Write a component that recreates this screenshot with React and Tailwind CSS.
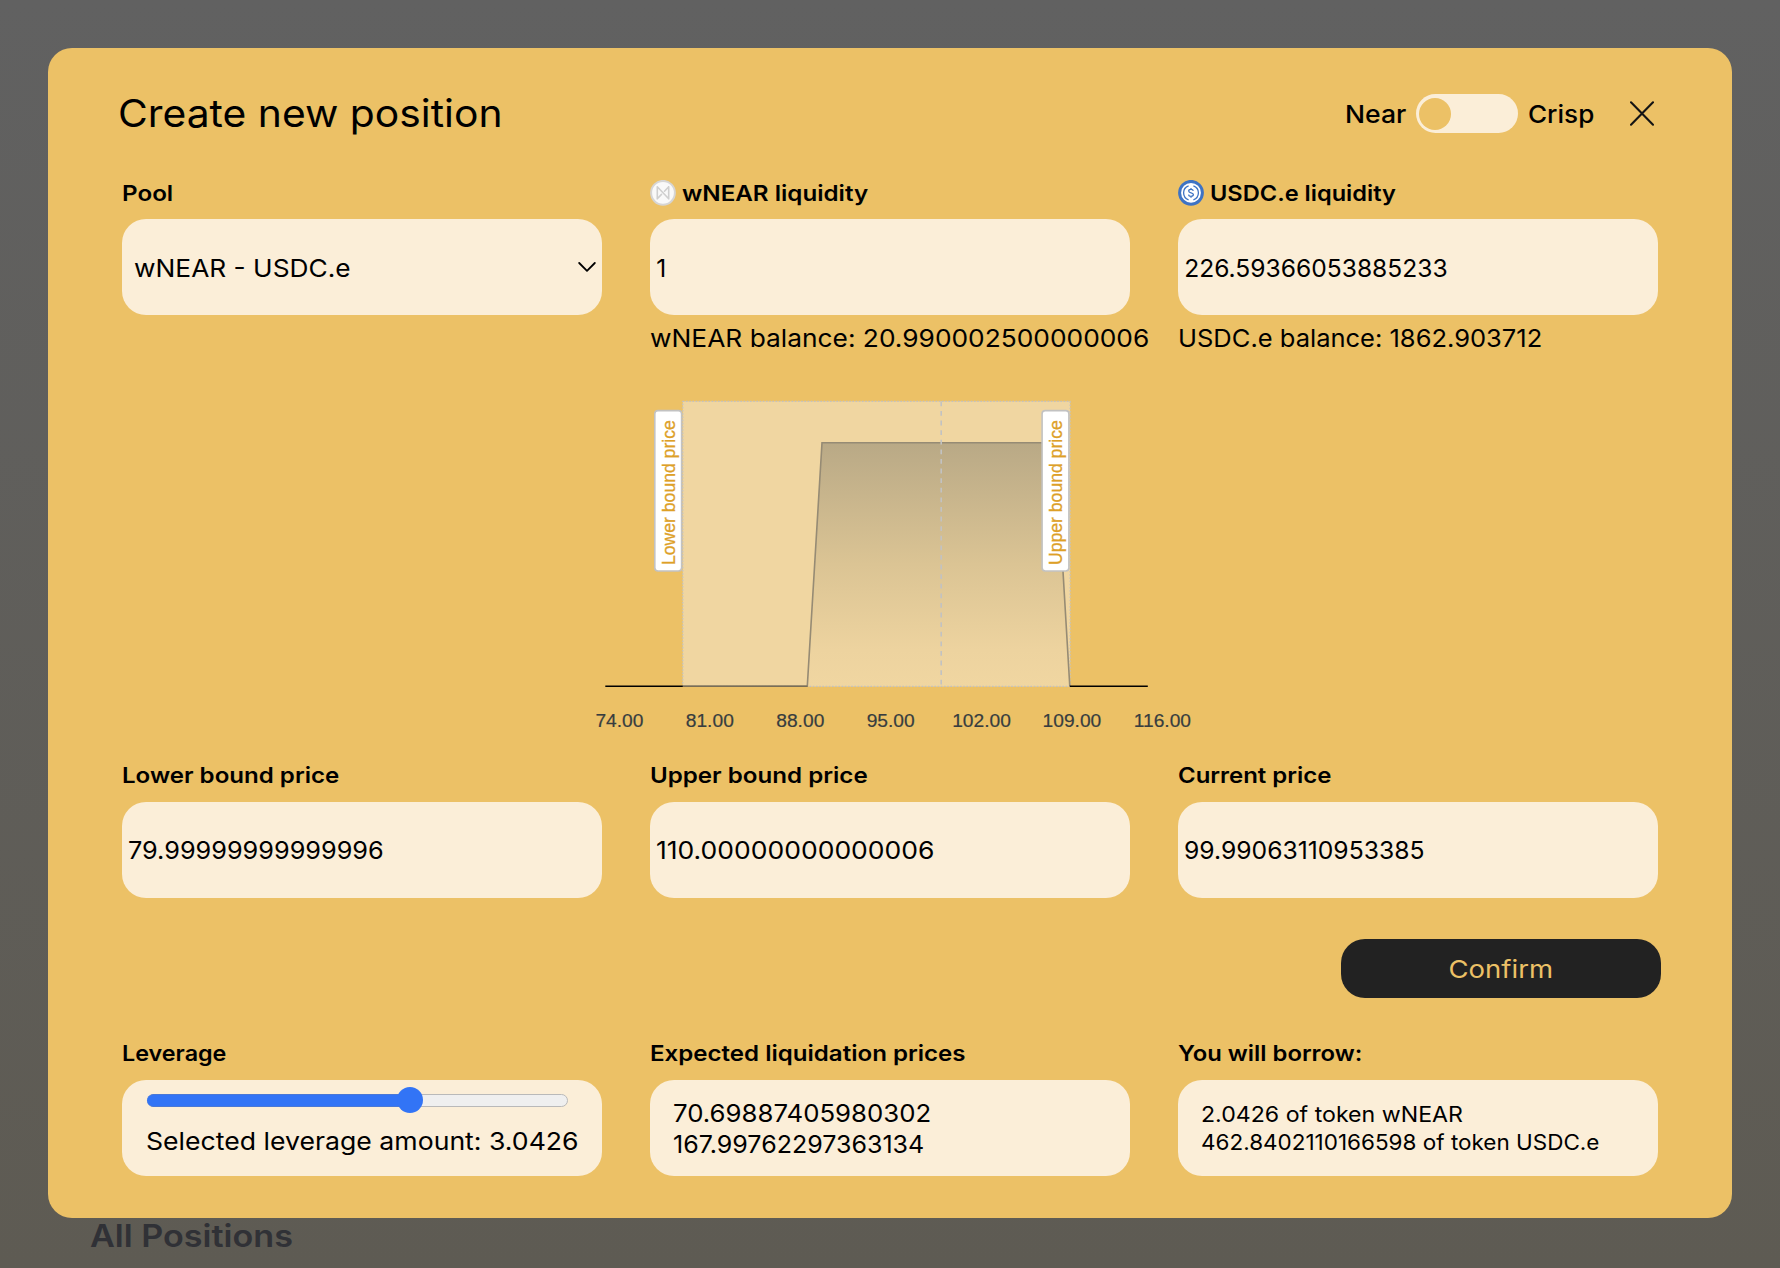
import React from "react";

function NearIcon() {
  return (
    <svg viewBox="0 0 26 26" className="h-[26px] w-[26px] shrink-0">
      <circle cx="13" cy="12.8" r="11.9" fill="#f9f9f9" stroke="#d6d5d4" strokeWidth="2" />
      <path
        d="M18.7 6.8v12M7.3 18.8v-12L18.7 18.8M7.300 18.800l4.200-4.400M18.700 6.800l-4.200 4.400"
        fill="none"
        stroke="#cfcfcf"
        strokeWidth="1.6"
        strokeLinecap="round"
        strokeLinejoin="round"
      />
    </svg>
  );
}

function UsdcIcon() {
  return (
    <svg viewBox="0 0 26 26" className="h-[26px] w-[26px] shrink-0" fill="none">
      <circle cx="13" cy="12.8" r="12.9" fill="#3e73c4" />
      <circle cx="13" cy="12.8" r="9.9" fill="#ffffff" />
      <path d="M10.6 5.8a7.4 7.4 0 0 0 0 14M15.4 5.8a7.4 7.4 0 0 1 0 14" stroke="#3e73c4" strokeWidth="1.3" />
      <path
        d="M15.3 10.9c-.2-1.1-1-1.6-2.3-1.6-1.4 0-2.3.6-2.3 1.7 0 2.5 4.7 1.1 4.7 3.6 0 1.1-1 1.8-2.4 1.8-1.4 0-2.3-.6-2.500-1.800M13 7.900v1.400M13 16.400v1.400"
        stroke="#3e73c4"
        strokeWidth="1.3"
      />
    </svg>
  );
}

function Field({ label, stretch, icon, gap = "mb-3.5", children }) {
  return (
    <div className="flex w-[480px] flex-col">
      <div className={`flex h-[26px] items-center gap-1.5 text-[21.6px] font-semibold whitespace-nowrap ${gap}`}>
        {icon}
        <span className={`origin-left ${stretch}`}>{label}</span>
      </div>
      {children}
    </div>
  );
}

function Value({ children, stretch = "", pad = "pt-[2px]" }) {
  return (
    <div className={`flex h-24 items-center rounded-3xl bg-[#fbeed8] pl-[6.2px] ${pad}`}>
      <span className={`origin-left ${stretch}`}>{children}</span>
    </div>
  );
}

const ticks = [
  ["74.00", 619.4],
  ["81.00", 709.8],
  ["88.00", 800.3],
  ["95.00", 890.7],
  ["102.00", 981.5],
  ["109.00", 1071.9],
  ["116.00", 1162.4],
];

function BoundLabel({ x, text, textX }) {
  return (
    <g>
      <rect x={x} y="410.6" width="26.8" height="160.4" rx="3.2" fill="#ffffff" stroke="#c2c2c2" strokeWidth="1.6" />
      <text
        transform={`translate(${textX} 565) rotate(-90)`}
        fill="#dda027"
        stroke="#dda027"
        strokeWidth="0.3"
        fontSize="17.6"
        fontFamily="'Liberation Sans', Arial, sans-serif"
      >
        {text}
      </text>
    </g>
  );
}

function LiquidityChart() {
  return (
    <svg viewBox="590 390 620 350" className="mt-9 ml-[468px] h-[350px] w-[620px]">
      <defs>
        <linearGradient id="liquidity" x1="0" y1="0" x2="0" y2="1">
          <stop offset="0" stopColor="#b9a986" />
          <stop offset="0.5" stopColor="#dbc494" />
          <stop offset="0.85" stopColor="#edd39f" />
          <stop offset="1" stopColor="#f0d6a1" />
        </linearGradient>
      </defs>
      <rect x="682.8" y="401.4" width="387.3" height="285" fill="#f0d6a1" />
      <path d="M807.3 686.3L822 442.700H1055.400L1069.800 686.300Z" fill="url(#liquidity)" />
      <rect
        x="682.8"
        y="401.4"
        width="387.3"
        height="285"
        fill="none"
        stroke="#c2c2c2"
        strokeWidth="1.2"
        strokeDasharray="1.6"
      />
      <path d="M682.8 686.3H807.3L822 442.700H1055.400L1069.800 686.300" fill="none" stroke="#968b74" strokeWidth="1.6" />
      <path d="M682.8 686.300H807.300" stroke="#7a6e56" strokeWidth="1.6" />
      <path d="M605.3 686.300H682.800M1069.800 686.300H1147.800" stroke="#000000" strokeWidth="1.6" />
      <path d="M941.2 401.400V686.300" stroke="#c2c2c2" strokeWidth="1.6" strokeDasharray="4.8" />
      <BoundLabel x={654.8} textX={674.8} text="Lower bound price" />
      <BoundLabel x={1042.1} textX={1061.8} text="Upper bound price" />
      {ticks.map(([label, x]) => (
        <text
          key={label}
          x={x}
          y="727"
          textAnchor="middle"
          fill="#373d3f"
          stroke="#373d3f"
          strokeWidth="0.2"
          fontSize="19.2"
          fontFamily="'Liberation Sans', Arial, sans-serif"
        >
          {label}
        </text>
      ))}
    </svg>
  );
}

function LeverageSlider() {
  return (
    <div className="relative flex h-[26px] w-[421px] items-center">
      <div className="h-[13px] w-full rounded-full border border-[#b9b9b9] bg-[#efefef]" />
      <div className="absolute left-0 h-[13px] w-[263px] rounded-l-full border-y border-[#4a78d6] bg-[#3274f6]" />
      <div className="absolute left-[250.3px] h-[25.6px] w-[25.6px] rounded-full bg-[#3274f6]" />
    </div>
  );
}

export default function App() {
  return (
    <div className="relative flex h-[1268px] w-[1780px] flex-col justify-end overflow-hidden bg-linear-to-b from-[#616161] to-[#5e5b53] pb-3 font-[Inter,sans-serif] text-[24.6px] text-black">
      <h2 className="ml-[90px] w-fit origin-left scale-x-[1.108] text-[30.8px] leading-10 font-semibold text-[#303136]">
        All Positions
      </h2>

      <div className="absolute inset-x-12 top-12 flex h-[1170px] flex-col rounded-3xl bg-[#ecc166] px-[74px] pt-[46px]">
        <header className="-ml-1 flex h-[39px] items-center justify-between pr-1">
          <h1 className="origin-left scale-x-[1.06] text-[38.5px] leading-[39px] whitespace-nowrap">Create new position</h1>
          <div className="flex items-center font-medium">
            <span className="w-[71px] origin-left scale-x-[1.08] pt-px">Near</span>
            <div className="flex h-[39px] w-[102px] items-center rounded-full bg-[#fbeed8] pl-[3px]">
              <div className="h-8 w-8 rounded-full bg-[#ecc166]" />
            </div>
            <span className="ml-2.5 w-[102px] origin-left scale-x-[1.06] pt-px">Crisp</span>
            <svg viewBox="0 0 24 25" className="h-[25px] w-6" stroke="#141414" strokeWidth="2.1" strokeLinecap="round">
              <path d="M1 1.3l22 22.400M23 1.300L1 23.700" />
            </svg>
          </div>
        </header>

        <div className="mt-[47px] flex h-[174px] shrink-0 gap-12">
          <Field label="Pool" stretch="scale-x-[1.12]" gap="mb-[13px]">
            <div className="flex h-24 items-center justify-between rounded-3xl bg-[#fbeed8] pt-[2px] pr-[6px] pl-[12.4px]">
              <span className="origin-left scale-x-[1.069]">wNEAR - USDC.e</span>
              <svg
                viewBox="0 0 18 10"
                className="-mt-[2px] h-[10px] w-[18px]"
                fill="none"
                stroke="#000000"
                strokeWidth="1.8"
                strokeLinecap="round"
                strokeLinejoin="round"
              >
                <path d="M1.200 1l7.800 7.800L16.800 1" />
              </svg>
            </div>
          </Field>
          <Field label="wNEAR liquidity" stretch="scale-x-[1.119]" gap="mb-[13px]" icon={<NearIcon />}>
            <Value>1</Value>
            <p className="mt-[7px] w-fit origin-left scale-x-[1.07] leading-8 whitespace-nowrap">
              wNEAR balance: 20.990002500000006
            </p>
          </Field>
          <Field label="USDC.e liquidity" stretch="scale-x-[1.093]" gap="mb-[13px]" icon={<UsdcIcon />}>
            <Value>226.59366053885233</Value>
            <p className="mt-[7px] w-fit origin-left scale-x-[1.037] leading-8 whitespace-nowrap">
              USDC.e balance: 1862.903712
            </p>
          </Field>
        </div>

        <LiquidityChart />

        <div className="mt-[22px] flex gap-12">
          <Field label="Lower bound price" stretch="scale-x-[1.115]">
            <Value stretch="scale-x-[1.028]" pad="pt-0">79.99999999999996</Value>
          </Field>
          <Field label="Upper bound price" stretch="scale-x-[1.117]">
            <Value stretch="scale-x-[1.078]" pad="pt-0">110.00000000000006</Value>
          </Field>
          <Field label="Current price" stretch="scale-x-[1.109]">
            <Value stretch="scale-x-[1.004]" pad="pt-0">99.99063110953385</Value>
          </Field>
        </div>

        <button className="mt-[41px] -mr-[3px] flex h-[59px] w-80 shrink-0 items-center justify-center self-end rounded-3xl bg-[#222222] pt-[2px] text-[#ecc166]">
          <span className="scale-x-[1.119]">Confirm</span>
        </button>

        <div className="mt-[42px] flex gap-12">
          <Field label="Leverage" stretch="scale-x-[1.08]">
            <div className="h-24 rounded-3xl bg-[#fbeed8] pt-[7px] pl-[25px]">
              <LeverageSlider />
              <p className="mt-3 -ml-[1.3px] w-fit origin-left scale-x-[1.083] leading-8 whitespace-nowrap">
                Selected leverage amount: 3.0426
              </p>
            </div>
          </Field>
          <Field label="Expected liquidation prices" stretch="scale-x-[1.115]">
            <div className="flex h-24 flex-col items-start justify-center rounded-3xl bg-[#fbeed8] pt-[2px] pl-[23.4px] leading-[31px]">
              <span className="origin-left scale-x-[1.048]">70.69887405980302</span>
              <span className="origin-left scale-x-[1.018]">167.99762297363134</span>
            </div>
          </Field>
          <Field label="You will borrow:" stretch="scale-x-[1.104]">
            <div className="flex h-24 flex-col items-start justify-center rounded-3xl bg-[#fbeed8] pl-[23.3px] text-[21.6px] leading-[28px]">
              <span className="origin-left scale-x-[1.072]">2.0426 of token wNEAR</span>
              <span className="origin-left scale-x-[1.041]">462.8402110166598 of token USDC.e</span>
            </div>
          </Field>
        </div>
      </div>
    </div>
  );
}
